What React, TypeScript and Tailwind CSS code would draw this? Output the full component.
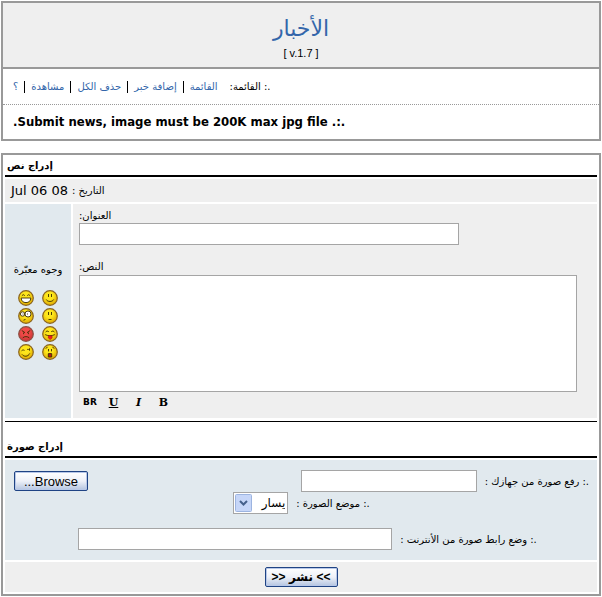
import type { ReactNode } from "react";

type Face = "grin" | "smile" | "eek" | "plain" | "mad" | "tongue" | "wink" | "shock";

const faces: { name: Face; label: string }[] = [
  { name: "smile", label: "ابتسامة" },
  { name: "grin", label: "ضحك" },
  { name: "plain", label: "عادي" },
  { name: "eek", label: "دهشة" },
  { name: "tongue", label: "لسان" },
  { name: "mad", label: "غضب" },
  { name: "shock", label: "صدمة" },
  { name: "wink", label: "غمزة" },
];

const menu = ["القائمة", "إضافة خبر", "حذف الكل", "مشاهدة", "؟"];

const Features = ({ name }: { name: Face }) => {
  switch (name) {
    case "grin":
      return (
        <>
          <path d="M3.8 5.8 5.2 4.6 6.8 5.6M9.2 5.6l1.6-1 1.4 1.2" />
          <path d="M3.2 8h9.6c0 3-2 4.6-4.8 4.6S3.2 11 3.2 8z" fill="#fff" />
        </>
      );
    case "smile":
      return <path d="M6.5 4v3M9.5 4v3M4.3 9.5c1 2.6 6.4 2.6 7.4 0" />;
    case "eek":
      return (
        <>
          <circle cx="4.6" cy="6" r="2.2" fill="#fff" />
          <circle cx="10" cy="6" r="3" fill="#fff" />
          <path d="M4.5 6h1M9 6h1M5.5 12.2l2-.8" />
        </>
      );
    case "plain":
      return <path d="M6.5 4v3M9.5 4v3M6.5 11.5h3" />;
    case "mad":
      return <path d="M3.8 4.5 7 6.7M12.2 4.5 9 6.7M5.6 6.5v1.7M10.4 6.5v1.7M4.8 11.8c1.5-1.6 4.9-1.6 6.4 0" />;
    case "tongue":
      return (
        <>
          <path d="M3.6 6 5 4.9l1.8.8M9.2 5.7l1.8-.8L12.4 6M3.2 8.6c2 1.4 7.4 1.4 9.6 0" />
          <path d="M6.3 9.8h3.8v2.2l-1.9 1.6-1.9-1.6z" fill="#f02020" stroke="#a01010" strokeWidth="0.5" />
        </>
      );
    case "wink":
      return <path d="M3.5 6.8c1-1 2-1 3-.4M9.2 5.4h1.6M11.5 4.3v2.4M4 10.4c2 2.6 6 2.6 7.8-1" />;
    default:
      return (
        <>
          <path d="M3.6 4.4 5.6 3.2M12.4 4.4l-2-1.2M6.5 5v2.4M9.5 5v2.4" />
          <path d="M6.3 9.6h3.4v3.4H6.3z" fill="#c01818" />
        </>
      );
  }
};

const Smiley = ({ name }: { name: Face }) => (
  <svg viewBox="0 0 16 16" className="size-4" fill="none" stroke="#3c2c00" strokeWidth="0.9" aria-hidden="true">
    <defs>
      <radialGradient id={`face-${name}`} cx="0.45" cy="0.35" r="0.65">
        <stop offset="0.4" stopColor={name === "mad" ? "#f04a48" : "#fde61c"} />
        <stop offset="1" stopColor={name === "mad" ? "#c83434" : "#dfa800"} />
      </radialGradient>
    </defs>
    <circle cx="8" cy="8" r="7.3" fill={`url(#face-${name})`} stroke={name === "mad" ? "#8a5044" : "#8a6420"} strokeWidth="1.2" />
    <Features name={name} />
  </svg>
);

const SectionTitle = ({ children }: { children: ReactNode }) => (
  <h2 className="border-b-2 border-black px-[2px] text-left text-[10px] leading-[18px] font-bold">{children}</h2>
);

const field = "h-[22px] border border-[#a5a5a5] bg-white px-1 text-xs outline-none";
const xpButton =
  "h-5 rounded-[2px] border border-[#1f4384] bg-linear-to-b from-white via-[#eef1f8] to-[#b4c4e0] whitespace-nowrap shadow-[inset_0_0_0_1px_#b8c8e8]";

const Header = () => (
  <header className="border-2 border-[#999]">
    <div className="flex flex-col items-center border-b-2 border-[#999] bg-[#efefef] pt-[10px] pb-[6px]">
      <h1 className="text-[22px] leading-8 text-[#36a]">الأخبار</h1>
      <span className="font-[Liberation_Sans] text-[11px] leading-4" dir="ltr">
        [ v.1.7 ]
      </span>
    </div>
    <nav className="flex h-9 items-center justify-end border-b border-dotted border-[#999] px-[10px] text-[10px]">
      <span className="ml-3">.: القائمة:</span>
      {menu.map((item, i) => (
        <span key={item} className="flex items-center">
          {i > 0 && <span className="mx-[6px] h-3 w-px bg-black" />}
          <a href="#" className="text-[#36a]">
            {item}
          </a>
        </span>
      ))}
    </nav>
    <p className="px-[10px] py-2 text-left font-['DejaVu_Sans_Condensed','DejaVu_Sans',sans-serif] text-[13px] leading-[18px] font-bold">
      .:. Submit news, image must be 200K max jpg file.
    </p>
  </header>
);

const TextSection = () => (
  <section>
    <SectionTitle>إدراج نص</SectionTitle>
    <p className="my-[2px] flex items-center justify-end gap-1 bg-[#efefef] px-[6px] text-[10px] leading-[23px]">
      <span>التاريخ :</span>
      <span className="text-[13px]">Jul 06 08</span>
    </p>
    <div className="flex gap-[2px]" dir="ltr">
      <div className="flex w-[66px] shrink-0 flex-col items-center justify-center gap-3 bg-[#e1e9ee]">
        <span className="text-[10px] leading-4 whitespace-nowrap">وجوه معبّرة</span>
        <div className="grid grid-cols-2 gap-x-2 gap-y-[2px]" dir="rtl">
          {faces.map((face) => (
            <button key={face.name} type="button" aria-label={face.label}>
              <Smiley name={face.name} />
            </button>
          ))}
        </div>
      </div>
      <div className="min-w-0 flex-1 bg-[#efefef] pt-1 pr-5 pb-1 pl-[6px]">
        <label htmlFor="title" dir="rtl" className="block text-left text-[10px] leading-[15px]">
          العنوان:
        </label>
        <input id="title" dir="rtl" className={`${field} block w-full max-w-[380px]`} />
        <label htmlFor="body" dir="rtl" className="mt-[14px] block text-left text-[10px] leading-4">
          النص:
        </label>
        <textarea id="body" dir="rtl" className="block h-[117px] w-full resize-none border border-[#a5a5a5] bg-white outline-none" />
        <div className="flex h-[22px] items-center text-[11px] font-bold">
          <button type="button" className="w-[22px] text-[9px]">
            BR
          </button>
          <button type="button" className="w-[25px] font-[DejaVu_Serif] underline">
            U
          </button>
          <button type="button" className="w-[25px] font-[DejaVu_Serif] italic">
            I
          </button>
          <button type="button" className="w-[25px] font-[DejaVu_Serif]">
            B
          </button>
        </div>
      </div>
    </div>
  </section>
);

const ImageSection = () => (
  <section className="mt-[3px] border-t border-black pt-4">
    <SectionTitle>إدراج صورة</SectionTitle>
    <div className="my-[2px] bg-[#e1e9ee] pt-[10px] pr-2 pb-[10px] pl-[9px] text-[10px]">
      <div className="flex items-center">
        <label htmlFor="upload" className="ml-2 whitespace-nowrap">
          .: رفع صورة من جهازك :
        </label>
        <input id="upload" className={`${field} w-44`} />
        <button type="button" className={`${xpButton} mr-auto w-[74px] font-[Liberation_Sans] text-[13px] leading-none`}>
          Browse...
        </button>
      </div>
      <div className="flex items-center justify-center">
        <label htmlFor="place" className="ml-2 whitespace-nowrap">
          .: موضع الصورة :
        </label>
        <div className="relative">
          <select id="place" className="h-[22px] w-[55px] appearance-none border border-[#a5a5a5] bg-white pr-[2px] text-xs outline-none">
            <option>يسار</option>
          </select>
          <svg viewBox="0 0 17 18" className="pointer-events-none absolute top-[2px] left-[2px] h-[18px] w-[17px]" aria-hidden="true">
            <rect x="0.5" y="0.5" width="16" height="17" rx="1" fill="#c6d6f8" stroke="#9cb4e0" />
            <path d="m5 7 3.5 3.5L12 7" fill="none" stroke="#45608c" strokeWidth="2" />
          </svg>
        </div>
      </div>
      <div className="mt-[14px] flex items-center justify-center pl-3">
        <label htmlFor="link" className="ml-2 whitespace-nowrap">
          .: وضع رابط صورة من الأنترنت :
        </label>
        <input id="link" dir="ltr" className={`${field} w-[314px]`} />
      </div>
    </div>
    <div className="flex justify-center bg-[#efefef] py-[5px]">
      <button type="submit" className={`${xpButton} w-[73px] font-['Liberation_Sans','DejaVu_Sans',sans-serif] text-xs leading-none font-bold`}>
        &gt;&gt; نشر &lt;&lt;
      </button>
    </div>
  </section>
);

const App = () => {
  return (
    <main dir="rtl" className="bg-white p-px font-[DejaVu_Sans,sans-serif] text-black">
      <Header />
      <form className="mt-3 border-2 border-[#999] p-[2px]" onSubmit={(e) => e.preventDefault()}>
        <TextSection />
        <ImageSection />
      </form>
    </main>
  );
};

export default App;
